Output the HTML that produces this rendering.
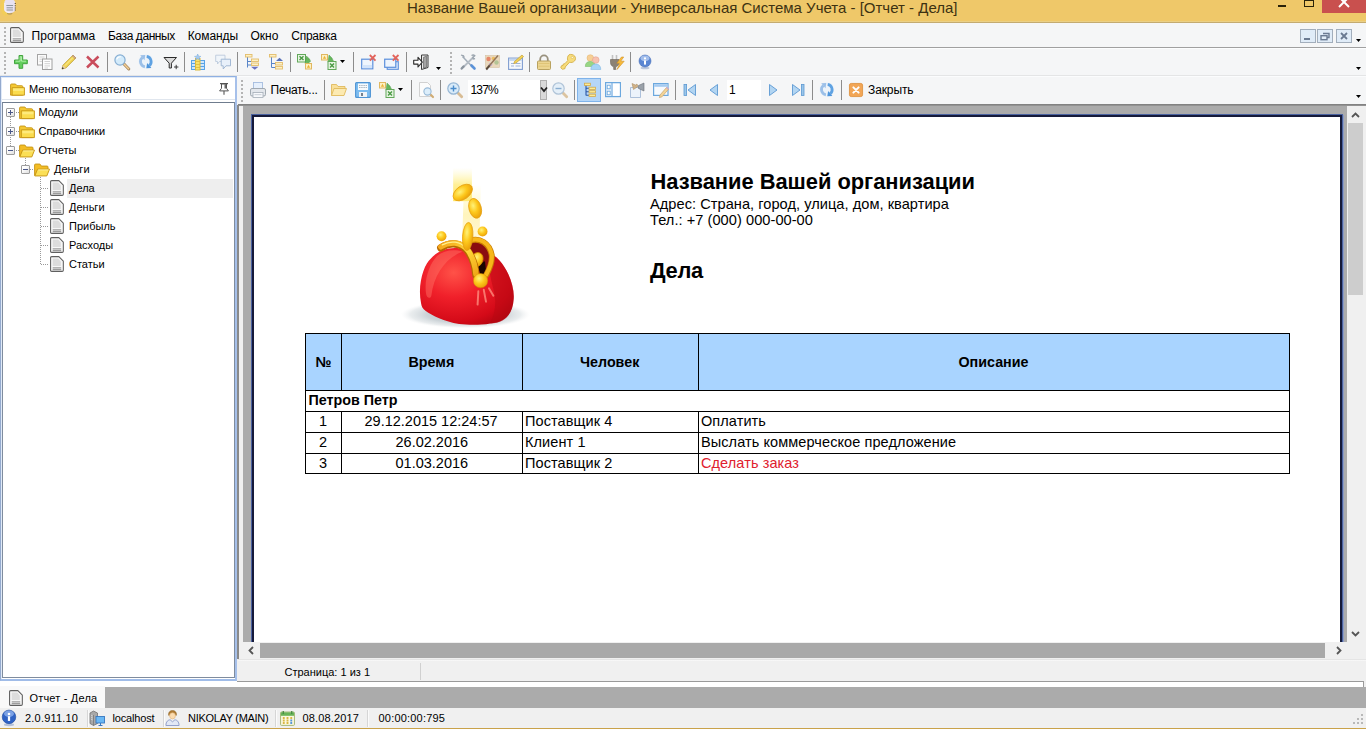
<!DOCTYPE html>
<html lang="ru">
<head>
<meta charset="utf-8">
<title>Название Вашей организации - Универсальная Система Учета - [Отчет - Дела]</title>
<style>
*{box-sizing:border-box;margin:0;padding:0}
html,body{width:1366px;height:729px;overflow:hidden;background:#f0f0f0;font-family:"Liberation Sans","DejaVu Sans",sans-serif;font-size:11px;color:#000}
#app{position:absolute;left:0;top:0;width:1366px;height:729px;overflow:hidden;background:#f0f0f0}
#app div,#app span,#app svg{position:absolute}
#app svg{overflow:visible}
.t{white-space:nowrap;line-height:1}
#title{left:0;top:0;width:1366px;height:22px;background:linear-gradient(#efc869 21px,#ebd085 21px)}
#titleline{left:0;top:22px;width:1366px;height:1px;background:#c4ab70}
#closebtn{left:1322px;top:0;width:44px;height:13px;background:#c9504e}
#minbtn{left:1278px;top:5px;width:8px;height:2px;background:#2a2208}
#maxbtn{left:1304px;top:-1px;width:10px;height:8px;border:1px solid #2a2208;border-top-width:2px}
#menubar{left:0;top:23px;width:1366px;height:24px;background:#f5f6f7}
#menuline{left:0;top:47px;width:1366px;height:1px;background:#a0a0a0}
#tb1{left:0;top:48px;width:1366px;height:27px;background:#f5f6f7}
#tb1line{left:0;top:75px;width:1366px;height:1px;background:#e4e5e6}
.sep{width:1px;background:#8c8c8c}
.grip{width:2px;background-image:linear-gradient(#b4b4b4 50%,rgba(0,0,0,0) 50%);background-size:2px 4px}
.mdi{width:16px;height:14px;background:#e0ecf8;border:1px solid #a2aebc}
#lp{left:0;top:76px;width:237px;height:605px;background:#fff;border:1px solid #8fb0e2;border-left-color:#94aace;border-right:2px solid #a6c0ea;border-bottom:2px solid #a0bce8;box-shadow:inset 1px 1px 0 0 #e0eaf8}
#lphead{left:2px;top:78px;width:233px;height:22px;background:#fff;border-bottom:1px solid #e0e6ee}
#tree{left:2px;top:102px;width:233px;height:576px;background:#fff;border:1px solid #7f8c9e;border-top-color:#6f7c8e}
#sel{left:67px;top:179px;width:166px;height:19px;background:#eeeeee}
.vdot{width:1px;background-image:linear-gradient(#9a9a9a 50%,rgba(0,0,0,0) 50%);background-size:1px 2px}
.hdot{height:1px;background-image:linear-gradient(90deg,#9a9a9a 50%,rgba(0,0,0,0) 50%);background-size:2px 1px}
.exp{width:9px;height:9px;border:1px solid #9c9c9c;border-radius:1px;background:linear-gradient(135deg,#fff 30%,#dedede)}
.exp i{position:absolute;background:#4a5788}
.exp i.h{left:1px;top:3px;width:5px;height:1px}
.exp i.v{left:3px;top:1px;width:1px;height:5px}
.tn{font-size:11px}
#tb2{left:237px;top:76px;width:1129px;height:28px;background:#f5f6f7}
#tb2line{left:238px;top:104px;width:1128px;height:2px;background:linear-gradient(#7a7a7a,#9a9a9a)}
#combo{left:468px;top:80px;width:79px;height:20px;background:#fff}
#combobtn{left:540px;top:80px;width:7px;height:20px;background:#d9d9d9;border:1px solid #b0b0b0}
#hibtn{left:577px;top:78px;width:24px;height:24px;background:#b5d6f7;border:1px solid #7fb3ea}
#pageinp{left:727px;top:80px;width:34px;height:20px;background:#fff}
#pv{left:239px;top:106px;width:1108px;height:536px;background:#ababab}
#pvleft{left:237px;top:105px;width:2px;height:554px;background:#8a8a8a}
#pvstrip{left:239px;top:106px;width:4px;height:536px;background:#f0f0f0}
#page{left:252px;top:115px;width:1090px;height:540px;background:#fff;border:2px solid #151a3a;box-shadow:0 0 0 1px #4a62a0,2px 0 0 0 #8e9cc4}
#vs{left:1347px;top:106px;width:17px;height:536px;background:#f0f0f0}
#vsthumb{left:1348px;top:123px;width:15px;height:172px;background:#cdcdcd}
#hs{left:239px;top:642px;width:1108px;height:17px;background:#f0f0f0}
#hsthumb{left:260px;top:643px;width:1065px;height:15px;background:#a9a9a9}
#pvbottom{left:238px;top:659px;width:1128px;height:2px;background:linear-gradient(#dcdcdc,#fff)}
#pgstat{left:238px;top:661px;width:1128px;height:20px;background:#f0f0f0}
#pgsep{left:420px;top:663px;width:1px;height:17px;background:#d0d0d0}
#whitebox{left:0px;top:681px;width:1364px;height:6px;background:#fff;border-right:1px solid #9a9a9a}
#whiteboxtop{left:237px;top:681px;width:1127px;height:1px;background:#9a9a9a}
#tabband{left:0;top:687px;width:1366px;height:21px;background:#ababab}
#tab{left:0;top:686px;width:105px;height:22px;background:#f9f9f9}
#statusbar{left:0;top:708px;width:1366px;height:20px;background:#f0f0f0}
#goldline{left:0;top:728px;width:1366px;height:1px;background:#c9a24a}
.st{font-size:11px}
.rb{font-weight:bold}
#thead{left:305px;top:333px;width:985px;height:58px;background:#a9d4ff}
.hl{left:305px;width:985px;height:1px;background:#000}
.vl{width:1px;background:#000}
.tb{font-weight:bold;font-size:14.300px}
.tr{font-size:14.500px}
.ssep{top:710px;width:2px;height:17px;background:linear-gradient(90deg,#d6d6d6 50%,#fbfbfb 50%)}
#hl1{left:0;top:48px;width:1366px;height:1px;background:#fcfdfe}
#hl2{left:237px;top:76px;width:1129px;height:1px;background:#fbfcfd}
.cy{letter-spacing:.09px}
</style>
</head>
<body>
<div id="app">
<!-- title bar -->
<div id="title"></div><div id="titleline"></div>
<svg style="left:3px;top:-1px" width="13.5" height="16" viewBox="0 0 16 16" preserveAspectRatio="none"><ellipse cx="3" cy="8" rx="6" ry="9" fill="#f7d24a" opacity=".45"/><path d="M1.500 4q0-3.500 3.500-3.500h5q4.500 0 4.500 4v6c0 2-2.800 3.500-6.500 3.500s-6.500-1.500-6.500-3.500z" fill="#e8e2f2"/><path d="M2.200 4v6.500c0 1.800 2.600 3 5.800 3" fill="none" stroke="#f8f4fc" stroke-width="1"/><path d="M4 6.500h8M4.300 8.800h7.500M4.300 11h7.500" stroke="#7c888c" stroke-width=".9"/><path d="M14.500 4v8" stroke="#4a3a2a" stroke-width="1.200" stroke-dasharray="1 1.200"/><path d="M5 14.500c2 .7 4 .7 6 0" stroke="#8a7a5a" stroke-width=".8" fill="none"/></svg>
<span class="t " id="titletxt" style="left:407px;top:0px;font-size:15px;color:#3d3212">Название Вашей организации - Универсальная Система Учета - [Отчет - Дела]</span>
<div id="minbtn"></div><div id="maxbtn"></div><div id="closebtn"></div>
<svg style="left:1338px;top:-3px" width="12" height="12" viewBox="0 0 12 12"><path d="M1 0l10 10M11 0L1 10" stroke="#fff" stroke-width="2"/></svg>
<!-- menu bar -->
<div id="menubar"></div><div id="menuline"></div>
<div class="grip" style="left:4px;top:27px;height:18px"></div>
<svg style="left:10px;top:27px" width="14" height="16" viewBox="0 0 14.500 16" preserveAspectRatio="none"><path d="M1.700.6h7.500l4.600 4.600v9q0 1.200-1.200 1.200H1.700q-1.100 0-1.100-1.200V1.800Q.6.600 1.700.6z" fill="#f6f6f6" stroke="#5f5f5f" stroke-width="1.100" stroke-linejoin="round"/><path d="M2.800 2.500h5.700l2.700 3v4.500H2.800z" fill="#dcdcdc"/><path d="M2.800 11.800h8.800M2.800 13.600h8.800" stroke="#9c9c9c" stroke-width="1.300"/></svg>
<span class="t " id="m1" style="left:31.6px;top:30px;font-size:12px;letter-spacing:0.1px">Программа</span>
<span class="t " id="m2" style="left:108px;top:30px;font-size:12px;letter-spacing:-0.42px">База данных</span>
<span class="t " id="m3" style="left:187.7px;top:30px;font-size:12px;letter-spacing:-0.07px">Команды</span>
<span class="t " id="m4" style="left:250.4px;top:30px;font-size:12px;letter-spacing:0.07px">Окно</span>
<span class="t " id="m5" style="left:291.2px;top:30px;font-size:12px;letter-spacing:-0.22px">Справка</span>
<div class="mdi" style="left:1300px;top:29px"></div>
<div class="mdi" style="left:1317px;top:29px"></div>
<div class="mdi" style="left:1336px;top:29px"></div>
<div style="left:1304px;top:38px;width:6px;height:2px;background:#6a7a92"></div>
<svg style="left:1320px;top:31px" width="10" height="10" viewBox="0 0 10 10"><path d="M3 2.500h6v4h-2" fill="none" stroke="#6a7a92" stroke-width="1.400"/><rect x="1" y="4.700" width="6" height="4" fill="none" stroke="#6a7a92" stroke-width="1.400"/></svg>
<svg style="left:1340px;top:32px" width="8" height="8" viewBox="0 0 8 8"><path d="M1 1l6 6M7 1L1 7" stroke="#6a7a92" stroke-width="1.800"/></svg>
<svg style="left:1356px;top:39px" width="5" height="3" viewBox="0 0 5 3"><path d="M0 0h5L2.500 3z" fill="#000"/></svg>
<!-- toolbar 1 -->
<div id="tb1"></div><div id="tb1line"></div><div id="hl1"></div>
<div class="grip" style="left:4px;top:52px;height:22px"></div>
<svg style="left:13px;top:54px" width="16" height="16" viewBox="0 0 16 16" preserveAspectRatio="none"><path d="M6 1.500h3.700v4.500h4.600v3.700H9.700v4.600H6V9.700H1.500V6h4.500z" fill="#63cf5e" stroke="#43a43f" stroke-width="1" stroke-linejoin="round"/><path d="M7.200 2.700h1.300v4.500h4.600M7.200 2.700v4.500H2.700" fill="none" stroke="#b4f0ae" stroke-width=".9"/></svg>
<svg style="left:36.5px;top:54px" width="16" height="16" viewBox="0 0 16 16" preserveAspectRatio="none"><rect x=".5" y=".5" width="9" height="10.500" fill="#fbfbfb" stroke="#a4a4a4"/><path d="M2.500 3h5M2.500 5.200h5M2.500 7.400h2.500" stroke="#c9c9c9" stroke-width=".8"/><rect x="5.500" y="5" width="9.500" height="10.500" fill="#fdfdfd" stroke="#a0a0a0"/><path d="M7.500 7.500h5.500M7.500 9.700h5.500M7.500 11.900h5.500M7.500 14h3.500" stroke="#c6c6c6" stroke-width=".8"/></svg>
<svg style="left:61px;top:54px" width="16" height="16" viewBox="0 0 16 16" preserveAspectRatio="none"><path d="M1 15l1-3.800L12 1.200l2.800 2.800L4.800 14z" fill="#f2d653" stroke="#bfa23a" stroke-width=".9" stroke-linejoin="round"/><path d="M1 15l1-3.800L4.800 14z" fill="#e9cfa8"/><path d="M.8 15.200l.7-2.200 1.500 1.500z" fill="#3a3a3a"/><path d="M11.200 2l2.800 2.800.9-.9L12.100 1.100z" fill="#d4a793" stroke="#a98468" stroke-width=".5"/><path d="M4 11.500L12 3.500" stroke="#fbeb9a" stroke-width="1"/></svg>
<svg style="left:84.5px;top:54px" width="16" height="16" viewBox="0 0 16 16" preserveAspectRatio="none"><path d="M2 2.500l11.500 11M13.500 2.500L2 13.500" stroke="#c94c5c" stroke-width="2.500" stroke-linecap="butt"/></svg>
<svg style="left:114px;top:54px" width="16" height="16" viewBox="0 0 16 16" preserveAspectRatio="none"><path d="M9.500 9.500l5.300 5.500" stroke="#a5855c" stroke-width="3" stroke-linecap="round"/><path d="M10 10l4.600 4.800" stroke="#f3cf94" stroke-width="1.500" stroke-linecap="round"/><circle cx="6" cy="6" r="5.100" fill="#d3ebfb" stroke="#86aed3" stroke-width="1.200"/><path d="M2.800 5.500A3.400 3.400 0 0 1 6.800 2.800" stroke="#fff" stroke-width="1.200" fill="none"/></svg>
<svg style="left:138px;top:54px" width="16" height="16" viewBox="0 0 16 16" preserveAspectRatio="none"><circle cx="7.800" cy="7.600" r="7.400" fill="#e6f2fc" opacity=".6"/><path d="M6.900 12.800A5.300 5.300 0 0 1 4.400 3.500" fill="none" stroke="#9cc0e8" stroke-width="2.800"/><path d="M7.300 1L2.200 1.200 6.500 6.200z" fill="#9cc0e8"/><path d="M8.700 2.400A5.300 5.300 0 0 1 11.200 11.700" fill="none" stroke="#5fa2e2" stroke-width="2.800"/><path d="M8.300 14.200l5.100-.2L9.100 9z" fill="#4f96dc"/></svg>
<svg style="left:162.5px;top:54px" width="16" height="16" viewBox="0 0 16 16" preserveAspectRatio="none"><path d="M1 3.500h12.500L8.400 9.200v4.800H6.200V9.200z" fill="#dcdcdc" stroke="#2a2a2a" stroke-width="1" stroke-linejoin="round"/><path d="M11 13h4.400M13.200 10.800v4.400" stroke="#2a2a2a" stroke-width=".9"/></svg>
<svg style="left:190px;top:54px" width="16" height="16" viewBox="0 0 16 16" preserveAspectRatio="none"><rect x="1.500" y="6.500" width="13" height="9" fill="#cfe6fb" stroke="#58a3e6"/><path d="M1.500 9.500h13M1.500 12.500h13" stroke="#58a3e6"/><rect x="5.500" y="4.500" width="4.500" height="11.500" fill="#f9e26a" stroke="#dcb93c"/><path d="M5.500 7.500h4.500M5.500 10.500h4.500M5.500 13.500h4.500" stroke="#dcb93c" stroke-width=".8"/><path d="M7.700 0l.9 2.200 2.300.2-1.800 1.400.6 2.200-2-1.300-2 1.300.6-2.200-1.800-1.400 2.300-.2z" fill="#a6cbf0" stroke="#76a8dc" stroke-width=".5"/></svg>
<svg style="left:215px;top:54px" width="16" height="16" viewBox="0 0 16 16" preserveAspectRatio="none"><path d="M.7 1.200h9.300v6.300h-5.500l-2 2.500v-2.500H.7z" fill="#f0f5fa" stroke="#bccbdc" stroke-width=".9"/><path d="M6.200 5.200h9.300v6.600h-4.500l-2.800 3.200v-3.200h-2z" fill="#e8f0fa" stroke="#9ab2d0" stroke-width=".9" stroke-linejoin="round"/></svg>
<svg style="left:245px;top:54px" width="16" height="16" viewBox="0 0 16 16" preserveAspectRatio="none"><path d="M2.500 3v10.500M2.500 7.500h4M2.500 11h4" stroke="#5a86c8" stroke-width="1" fill="none"/><rect x=".5" y=".5" width="6.500" height="2.500" fill="#fdf0c4" stroke="#e3bd6a" stroke-width=".9"/><rect x="6.500" y="5" width="7" height="2.500" fill="#fdf0c4" stroke="#e3bd6a" stroke-width=".9"/><rect x="6.500" y="9" width="7" height="2.500" fill="#fdf0c4" stroke="#e3bd6a" stroke-width=".9"/><path d="M6 12.800h7.500l-3.750 3z" fill="#6a72c0"/></svg>
<svg style="left:268.5px;top:54px" width="16" height="16" viewBox="0 0 16 16" preserveAspectRatio="none"><path d="M2.500 3v10.500M2.500 9.500h4M2.500 13.500h4" stroke="#5a86c8" stroke-width="1" fill="none"/><rect x=".5" y=".5" width="6.500" height="2.500" fill="#fdf0c4" stroke="#e3bd6a" stroke-width=".9"/><rect x="6.500" y="8.500" width="7" height="2.500" fill="#fdf0c4" stroke="#e3bd6a" stroke-width=".9"/><rect x="6.500" y="12.500" width="7" height="2.500" fill="#fdf0c4" stroke="#e3bd6a" stroke-width=".9"/><path d="M7 7h7l-3.500-3.300z" fill="#5a72b8"/></svg>
<svg style="left:297px;top:54px" width="16" height="16" viewBox="0 0 16 16" preserveAspectRatio="none"><rect x=".5" y=".5" width="8" height="7.500" fill="#e8f5e4" stroke="#62a85a"/><path d="M2.500 2.300l4 3.800M6.500 2.300l-4 3.800" stroke="#4a9a44" stroke-width="1.400"/><path d="M9.500 2l3.500 3.500h-1.200l2 1.500-3.300 3-1-1.500-1.500 1z" fill="#66b85c" stroke="#3f8f3a" stroke-width=".4"/><rect x="8.500" y="9.500" width="6" height="5.500" fill="#fdf0c4" stroke="#e0b860"/><path d="M11.500 10.800l1.700 3h-3.400z" fill="#eab435"/></svg>
<svg style="left:321px;top:54px" width="16" height="16" viewBox="0 0 16 16" preserveAspectRatio="none"><rect x=".5" y=".5" width="6" height="5.500" fill="#fdf0c4" stroke="#e0b860"/><path d="M3.500 1.800l1.700 3H1.800z" fill="#eab435"/><path d="M8 1l3.500 3.500h-1.200l2.200 1.800-3 2.700-1.200-1.500-1.300.8z" fill="#66b85c" stroke="#3f8f3a" stroke-width=".4"/><rect x="7" y="7.500" width="8" height="8" fill="#e8f5e4" stroke="#62a85a"/><path d="M9 9.500l4 4M13 9.500l-4 4" stroke="#4a9a44" stroke-width="1.400"/></svg>
<svg style="left:361px;top:54px" width="16" height="16" viewBox="0 0 16 16" preserveAspectRatio="none"><rect x=".7" y="5.200" width="11.100" height="9.600" fill="#eef5fd" stroke="#5b8fdc" stroke-width="1.200"/><rect x="1.400" y="11" width="9.700" height="3.200" fill="#d3e4fa"/><path d="M8.800 1l5.700 5.700M14.500 1L8.800 6.700" stroke="#e2645c" stroke-width="1.800"/></svg>
<svg style="left:384px;top:54px" width="16" height="16" viewBox="0 0 16 16" preserveAspectRatio="none"><rect x="3.200" y="7.700" width="11.100" height="7.600" fill="#dfebfb" stroke="#5b8fdc" stroke-width="1.100"/><rect x=".7" y="5.200" width="11.100" height="8.100" fill="#eef5fd" stroke="#5b8fdc" stroke-width="1.200"/><path d="M8.800 1l5.700 5.700M14.500 1L8.800 6.700" stroke="#e2645c" stroke-width="1.800"/></svg>
<svg style="left:413px;top:54px" width="16" height="16" viewBox="0 0 16 16" preserveAspectRatio="none"><path d="M8.500 1h6.500v12.500l-6.500 2z" fill="#ececec" stroke="#3a3a3a" stroke-width="1"/><path d="M10.500 3.200l3-1v11l-3 1z" fill="#a4a4a4" stroke="#555" stroke-width=".6"/><path d="M.7 6.300h4.300V3.400l4.300 4.800-4.300 4.800v-2.900H.7z" fill="#fff" stroke="#2a2a2a" stroke-width="1.100" stroke-linejoin="round"/></svg>
<svg style="left:460px;top:54px" width="16" height="16" viewBox="0 0 16 16" preserveAspectRatio="none"><path d="M2.500 2.500l10 10.500" stroke="#a2adb8" stroke-width="1.500"/><path d="M11.500 11.500l3 3" stroke="#5b92d8" stroke-width="2.600" stroke-linecap="round"/><path d="M13.500 3L3 13.500" stroke="#b4bcc4" stroke-width="1.800"/><path d="M11.500 1.500c1-.6 2.500-.6 3.300.2l-2 1.800.5 1.500 1.800-.3" fill="none" stroke="#9aa4ae" stroke-width="1.300"/><path d="M3.500 12.500l-1.800 2" stroke="#8a949e" stroke-width="2.400" stroke-linecap="round"/><path d="M1 1l2.500.8.700 1.700" stroke="#9aa4ae" stroke-width="1.300" fill="none"/></svg>
<svg style="left:484px;top:54px" width="16" height="16" viewBox="0 0 16 16" preserveAspectRatio="none"><rect x="1.500" y="1.500" width="14" height="12" fill="#e9d8bc" stroke="#d4c2a2" stroke-width=".6"/><circle cx="4.500" cy="5" r="2.200" fill="#e6876a"/><circle cx="9.500" cy="4.500" r="1.800" fill="#ecbc62"/><circle cx="12.500" cy="8.500" r="2.200" fill="#b3c496"/><circle cx="6.500" cy="10.500" r="1.800" fill="#c4b2d2"/><path d="M14 1.500L5.500 11.500" stroke="#94765a" stroke-width="1.500"/><path d="M5.700 11.300l-3.500 4.200" stroke="#5a4a3a" stroke-width="2"/></svg>
<svg style="left:507.5px;top:54px" width="16" height="16" viewBox="0 0 16 16" preserveAspectRatio="none"><rect x=".6" y="4.100" width="13.800" height="11.300" fill="#f6f9fd" stroke="#7f9dd0" stroke-width="1.100"/><rect x="1.200" y="4.700" width="12.600" height="2.200" fill="#c4d6f0"/><path d="M3 9.500h3M3 12h3M7.500 9.500h5M7.500 12h5" stroke="#9eb4da" stroke-width="1.100"/><path d="M6.500 7.500L14 1l1.500 1.700L8 9l-2.200.6z" fill="#f4d458" stroke="#c09c36" stroke-width=".7"/></svg>
<svg style="left:536px;top:54px" width="16" height="16" viewBox="0 0 16 16" preserveAspectRatio="none"><path d="M4.200 7.500V5.200a3.800 3.800 0 0 1 7.600 0v2.300" fill="none" stroke="#99917e" stroke-width="1.800"/><rect x="1.500" y="7" width="13" height="8.500" rx="1" fill="#ecd591" stroke="#b9a260"/><path d="M2.500 9.500h11M2.500 12.200h11" stroke="#dfc476" stroke-width="1"/></svg>
<svg style="left:560px;top:54px" width="16" height="16" viewBox="0 0 16 16" preserveAspectRatio="none"><path d="M9 .8c1.700-.8 4.300-.3 5.700 1.300 1.200 1.600 1 3.700-.3 5-1.500 1.400-3.200 1.700-4.800 1.100L5.200 13l-.2 1.600-2.500.7-1.700-1.500.6-2 1.600-.3.300-1.500 1.600-.3 2.900-3.200C7 4.400 7.600 2 9 .8z" fill="#f7dc7c" stroke="#d4b04a" stroke-width=".9" stroke-linejoin="round"/><circle cx="12.300" cy="3.500" r="1.100" fill="#fff8dc" stroke="#d4b04a" stroke-width=".5"/></svg>
<svg style="left:584.5px;top:54px" width="16" height="16" viewBox="0 0 16 16" preserveAspectRatio="none"><circle cx="5.300" cy="4" r="3.300" fill="#f6cf96" stroke="#e0b26c" stroke-width=".5"/><path d="M.3 12.500c0-3.300 1.800-5 5-5s5 1.700 5 5z" fill="#98d684" stroke="#6eb65e" stroke-width=".5"/><circle cx="10.800" cy="6" r="3.300" fill="#f7c2b0" stroke="#e09a86" stroke-width=".5"/><path d="M5.800 15.500c0-3.500 2-5.500 5-5.500s5 2 5 5.500z" fill="#a6d4f6" stroke="#78b0de" stroke-width=".5"/></svg>
<svg style="left:609px;top:54px" width="16" height="16" viewBox="0 0 16 16" preserveAspectRatio="none"><path d="M3.500 1v5M7.500 1v5" stroke="#c2c2c2" stroke-width="1.600"/><path d="M1.500 5.500h8.500v3c0 2.500-1.800 4-3.300 4.300V15.500h-2v-2.700C3.300 12.500 1.500 11 1.500 8.500z" fill="#8c8274" stroke="#6a6258" stroke-width=".6"/><path d="M12.500 3L7.800 9.200h3l-2.800 6.300 7.200-8.300h-3.500l3-4.200z" fill="#f8bb3c" stroke="#d09024" stroke-width=".6" stroke-linejoin="round"/></svg>
<svg style="left:637px;top:54px" width="16" height="16" viewBox="0 0 16 16" preserveAspectRatio="none"><ellipse cx="8" cy="14" rx="4.500" ry="1.300" fill="#bcc8dc"/><circle cx="8" cy="7" r="6" fill="#5a86d2" stroke="#4a70b8" stroke-width=".6"/><ellipse cx="8" cy="4.200" rx="4.400" ry="2.800" fill="#b4ccf2" opacity=".8"/><rect x="7" y="6.400" width="2" height="4.200" fill="#fff"/><circle cx="8" cy="4.400" r="1.150" fill="#fff"/></svg>
<div class="sep" style="left:107px;top:52px;height:20px;background:#8c8c8c"></div>
<div class="sep" style="left:184px;top:52px;height:20px;background:#8c8c8c"></div>
<div class="sep" style="left:237px;top:52px;height:20px;background:#8c8c8c"></div>
<div class="sep" style="left:290px;top:52px;height:20px;background:#8c8c8c"></div>
<div class="sep" style="left:353px;top:52px;height:20px;background:#8c8c8c"></div>
<div class="sep" style="left:406px;top:52px;height:20px;background:#8c8c8c"></div>
<div class="sep" style="left:529px;top:52px;height:20px;background:#8c8c8c"></div>
<div class="sep" style="left:630px;top:52px;height:20px;background:#8c8c8c"></div>
<svg style="left:340px;top:60px" width="5" height="3" viewBox="0 0 5 3"><path d="M0 0h5L2.500 3z" fill="#000"/></svg>
<svg style="left:436px;top:67px" width="5" height="3" viewBox="0 0 5 3"><path d="M0 0h5L2.500 3z" fill="#000"/></svg>
<div class="grip" style="left:450px;top:52px;height:22px"></div>
<svg style="left:1356px;top:67px" width="5" height="3" viewBox="0 0 5 3"><path d="M0 0h5L2.500 3z" fill="#000"/></svg>
<!-- left panel: user menu -->
<div id="lp"></div>
<div id="lphead"></div>
<div id="tree"></div>
<svg style="left:10px;top:82.5px" width="15" height="13.5" viewBox="0 0 16 16" preserveAspectRatio="none"><path d="M.6 14.400V2.200q0-1 1-1h4.300l1.500 2h5.200q1 0 1 1v10.200z" fill="#f5c832" stroke="#c69516" stroke-width="1"/><path d="M2.300 5.500h13.100v8.900H2.300z" fill="#fbdc4e" stroke="#c69516" stroke-width="1" stroke-linejoin="round"/><path d="M3.300 6.500h11.100v3H3.300z" fill="#ffee88" opacity=".8"/></svg>
<span class="t" id="lptitle" style="left:29px;top:84px;font-size:11px">Меню пользователя</span>
<svg style="left:219px;top:83px" width="10" height="12" viewBox="0 0 10 12" preserveAspectRatio="none"><path d="M1 .6h8" stroke="#555" stroke-width="1.200"/><path d="M2.500 1v4.300L.6 7.900h8.800L7.500 5.300V1z" fill="#fff" stroke="#555" stroke-width="1" stroke-linejoin="round"/><path d="M6.300 1.200v4.300" stroke="#666" stroke-width="1.600"/><path d="M5 8v3.800" stroke="#555" stroke-width="1.100"/></svg>
<div id="sel"></div>
<!-- dotted connectors -->
<div class="vdot" style="left:10px;top:117px;height:29px"></div>
<div class="hdot" style="left:16px;top:112px;width:3px"></div>
<div class="hdot" style="left:16px;top:131px;width:3px"></div>
<div class="hdot" style="left:16px;top:150px;width:3px"></div>
<div class="vdot" style="left:25px;top:158px;height:7px"></div>
<div class="hdot" style="left:30px;top:169px;width:4px"></div>
<div class="vdot" style="left:40px;top:177px;height:88px"></div>
<div class="hdot" style="left:41px;top:188px;width:8px"></div>
<div class="hdot" style="left:41px;top:207px;width:8px"></div>
<div class="hdot" style="left:41px;top:226px;width:8px"></div>
<div class="hdot" style="left:41px;top:245px;width:8px"></div>
<div class="hdot" style="left:41px;top:264px;width:8px"></div>
<!-- expanders -->
<div class="exp" style="left:6px;top:108px"><i class="h"></i><i class="v"></i></div>
<div class="exp" style="left:6px;top:127px"><i class="h"></i><i class="v"></i></div>
<div class="exp" style="left:6px;top:146px"><i class="h"></i></div>
<div class="exp" style="left:21px;top:165px"><i class="h"></i></div>
<!-- nodes -->
<svg style="left:18.5px;top:105.5px" width="16" height="14" viewBox="0 0 16 16" preserveAspectRatio="none"><path d="M.6 14.400V2.200q0-1 1-1h4.300l1.500 2h5.200q1 0 1 1v10.200z" fill="#f5c832" stroke="#c69516" stroke-width="1"/><path d="M2.300 5.500h13.100v8.900H2.300z" fill="#fbdc4e" stroke="#c69516" stroke-width="1" stroke-linejoin="round"/><path d="M3.300 6.500h11.100v3H3.300z" fill="#ffee88" opacity=".8"/></svg>
<span class="t tn" style="left:38.500px;top:106.500px">Модули</span>
<svg style="left:18.5px;top:124.5px" width="16" height="14" viewBox="0 0 16 16" preserveAspectRatio="none"><path d="M.6 14.400V2.200q0-1 1-1h4.300l1.500 2h5.200q1 0 1 1v10.200z" fill="#f5c832" stroke="#c69516" stroke-width="1"/><path d="M2.300 5.500h13.100v8.900H2.300z" fill="#fbdc4e" stroke="#c69516" stroke-width="1" stroke-linejoin="round"/><path d="M3.300 6.500h11.100v3H3.300z" fill="#ffee88" opacity=".8"/></svg>
<span class="t tn" id="tn2" style="left:38.500px;top:125.500px">Справочники</span>
<svg style="left:18.5px;top:143.5px" width="16" height="14" viewBox="0 0 16 16" preserveAspectRatio="none"><path d="M.6 14.400V2.200q0-1 1-1h4.300l1.500 2.300h5.600q1 0 1 1v2.500" fill="#f3bd25" stroke="#c69516" stroke-width="1"/><path d="M.8 14.800l2.700-7.800h12l-2.700 7.800z" fill="#fbdf56" stroke="#c69516" stroke-width="1" stroke-linejoin="round"/><path d="M4.200 7.900h10.200" stroke="#fff5b0" stroke-width=".9"/></svg>
<span class="t tn" style="left:38.500px;top:144.500px">Отчеты</span>
<svg style="left:33.5px;top:162.5px" width="16" height="14" viewBox="0 0 16 16" preserveAspectRatio="none"><path d="M.6 14.400V2.200q0-1 1-1h4.300l1.500 2.300h5.600q1 0 1 1v2.500" fill="#f3bd25" stroke="#c69516" stroke-width="1"/><path d="M.8 14.800l2.700-7.800h12l-2.700 7.800z" fill="#fbdf56" stroke="#c69516" stroke-width="1" stroke-linejoin="round"/><path d="M4.200 7.900h10.200" stroke="#fff5b0" stroke-width=".9"/></svg>
<span class="t tn" style="left:54px;top:163.500px">Деньги</span>
<svg style="left:50px;top:180px" width="14" height="16" viewBox="0 0 14.500 16" preserveAspectRatio="none"><path d="M1.700.6h7.500l4.600 4.600v9q0 1.200-1.200 1.200H1.700q-1.100 0-1.100-1.200V1.800Q.6.600 1.700.6z" fill="#f6f6f6" stroke="#5f5f5f" stroke-width="1.100" stroke-linejoin="round"/><path d="M2.800 2.500h5.700l2.700 3v4.500H2.800z" fill="#dcdcdc"/><path d="M2.800 11.800h8.800M2.800 13.600h8.800" stroke="#9c9c9c" stroke-width="1.300"/></svg>
<span class="t tn" style="left:69px;top:182.500px">Дела</span>
<svg style="left:50px;top:199px" width="14" height="16" viewBox="0 0 14.500 16" preserveAspectRatio="none"><path d="M1.700.6h7.500l4.600 4.600v9q0 1.200-1.200 1.200H1.700q-1.100 0-1.100-1.200V1.800Q.6.600 1.700.6z" fill="#f6f6f6" stroke="#5f5f5f" stroke-width="1.100" stroke-linejoin="round"/><path d="M2.800 2.500h5.700l2.700 3v4.500H2.800z" fill="#dcdcdc"/><path d="M2.800 11.800h8.800M2.800 13.600h8.800" stroke="#9c9c9c" stroke-width="1.300"/></svg>
<span class="t tn" style="left:69px;top:201.500px">Деньги</span>
<svg style="left:50px;top:218px" width="14" height="16" viewBox="0 0 14.500 16" preserveAspectRatio="none"><path d="M1.700.6h7.500l4.600 4.600v9q0 1.200-1.200 1.200H1.700q-1.100 0-1.100-1.200V1.800Q.6.600 1.700.6z" fill="#f6f6f6" stroke="#5f5f5f" stroke-width="1.100" stroke-linejoin="round"/><path d="M2.800 2.500h5.700l2.700 3v4.500H2.800z" fill="#dcdcdc"/><path d="M2.800 11.800h8.800M2.800 13.600h8.800" stroke="#9c9c9c" stroke-width="1.300"/></svg>
<span class="t tn" style="left:69px;top:220.500px">Прибыль</span>
<svg style="left:50px;top:237px" width="14" height="16" viewBox="0 0 14.500 16" preserveAspectRatio="none"><path d="M1.700.6h7.500l4.600 4.600v9q0 1.200-1.200 1.200H1.700q-1.100 0-1.100-1.200V1.800Q.6.600 1.700.6z" fill="#f6f6f6" stroke="#5f5f5f" stroke-width="1.100" stroke-linejoin="round"/><path d="M2.800 2.500h5.700l2.700 3v4.500H2.800z" fill="#dcdcdc"/><path d="M2.800 11.800h8.800M2.800 13.600h8.800" stroke="#9c9c9c" stroke-width="1.300"/></svg>
<span class="t tn" style="left:69px;top:239.500px">Расходы</span>
<svg style="left:50px;top:256px" width="14" height="16" viewBox="0 0 14.500 16" preserveAspectRatio="none"><path d="M1.700.6h7.500l4.600 4.600v9q0 1.200-1.200 1.200H1.700q-1.100 0-1.100-1.200V1.800Q.6.600 1.700.6z" fill="#f6f6f6" stroke="#5f5f5f" stroke-width="1.100" stroke-linejoin="round"/><path d="M2.800 2.500h5.700l2.700 3v4.500H2.800z" fill="#dcdcdc"/><path d="M2.800 11.800h8.800M2.800 13.600h8.800" stroke="#9c9c9c" stroke-width="1.300"/></svg>
<span class="t tn" style="left:69px;top:258.500px">Статьи</span>

<!-- preview toolbar -->
<div id="tb2"></div><div id="tb2line"></div><div id="hl2"></div>
<div class="grip" style="left:241px;top:80px;height:22px"></div>
<svg style="left:250px;top:82px" width="16" height="16" viewBox="0 0 16 16" preserveAspectRatio="none"><rect x="3.500" y=".5" width="9" height="7" fill="#e6f0fc" stroke="#a4bcde" stroke-width=".9"/><rect x=".5" y="6.500" width="15" height="7.500" rx="1.500" fill="#e3e7ec" stroke="#99a1a9" stroke-width=".9"/><rect x="3" y="10.500" width="10" height="5" fill="#f7f9fc" stroke="#a4adb7" stroke-width=".8"/><path d="M4.500 12.700h7" stroke="#c7ced6"/></svg>
<span class="t" id="prn" style="left:270.500px;top:83.500px;font-size:12px;letter-spacing:-0.25px">Печать...</span>
<div class="sep" style="left:324px;top:80px;height:20px;background:#8c8c8c"></div>
<svg style="left:331px;top:82px" width="16" height="16" viewBox="0 0 16 16" preserveAspectRatio="none"><path d="M.5 13.500V2.500h5l1.500 2h7v2" fill="#f9e09a" stroke="#e0ba5c" stroke-width=".9"/><path d="M.5 13.500l2.500-7h12.500l-2.500 7z" fill="#fceab2" stroke="#e0ba5c" stroke-width=".9" stroke-linejoin="round"/></svg>
<svg style="left:355px;top:82px" width="16" height="16" viewBox="0 0 16 16" preserveAspectRatio="none"><rect x=".6" y=".6" width="14.800" height="14.800" rx="1" fill="#7cbcf0" stroke="#4f94d4" stroke-width="1.100"/><rect x="3" y="1.500" width="10" height="6.500" fill="#f6fafd"/><path d="M4 3.500h8M4 5.500h8" stroke="#a4b0bc" stroke-width=".9" stroke-dasharray="1.500 .7"/><rect x="4" y="10" width="8" height="5" fill="#f0f4f8"/><rect x="6" y="11" width="2" height="3" fill="#74808c"/></svg>
<svg style="left:379px;top:82px" width="16" height="16" viewBox="0 0 16 16" preserveAspectRatio="none"><rect x=".5" y=".5" width="6" height="5.500" fill="#fdf0c4" stroke="#e0b860"/><path d="M3.500 1.800l1.700 3H1.800z" fill="#eab435"/><path d="M8 1l3.500 3.500h-1.200l2.200 1.800-3 2.700-1.200-1.500-1.300.8z" fill="#66b85c" stroke="#3f8f3a" stroke-width=".4"/><rect x="7" y="7.500" width="8" height="8" fill="#e8f5e4" stroke="#62a85a"/><path d="M9 9.500l4 4M13 9.500l-4 4" stroke="#4a9a44" stroke-width="1.400"/></svg>
<svg style="left:398px;top:88px" width="5" height="3" viewBox="0 0 5 3"><path d="M0 0h5L2.500 3z" fill="#000"/></svg>
<div class="sep" style="left:411px;top:80px;height:20px;background:#8c8c8c"></div>
<svg style="left:418px;top:82px" width="16" height="16" viewBox="0 0 16 16" preserveAspectRatio="none"><path d="M1.500.5h8l3 3v11h-11z" fill="#fcfcfc" stroke="#cccccc" stroke-width=".9"/><path d="M11.500 11.500l3.500 3.500" stroke="#d0ac74" stroke-width="2.200" stroke-linecap="round"/><circle cx="9.500" cy="9.500" r="3.600" fill="#dceefb" stroke="#98bad8" stroke-width="1.100"/></svg>
<div class="sep" style="left:440px;top:80px;height:20px;background:#8c8c8c"></div>
<svg style="left:447px;top:82px" width="16" height="16" viewBox="0 0 16 16" preserveAspectRatio="none"><path d="M10.500 10.500l4.200 4.300" stroke="#d8bc94" stroke-width="2.800" stroke-linecap="round"/><circle cx="6.500" cy="6.500" r="5.700" fill="#d9ebf9" stroke="#96b6d4" stroke-width="1.200"/><path d="M3.500 6.500h6M6.500 3.500v6" stroke="#4a8ccc" stroke-width="1.400"/></svg>
<div id="combo"></div><div id="combobtn"></div>
<svg style="left:540px;top:86px" width="7" height="8" viewBox="0 0 7 8"><path d="M1 1.500l3 3.500 3-3.500" fill="none" stroke="#222" stroke-width="1.800"/></svg>
<span class="t" id="zoomtxt" style="left:470.500px;top:83.500px;font-size:12px;letter-spacing:-0.8px">137%</span>
<svg style="left:552px;top:82px" width="16" height="16" viewBox="0 0 16 16" preserveAspectRatio="none"><path d="M10.500 10.500l4.200 4.300" stroke="#dcc4a0" stroke-width="2.800" stroke-linecap="round"/><circle cx="6.500" cy="6.500" r="5.700" fill="#e4eff8" stroke="#b0c4d8" stroke-width="1.200"/><path d="M3.500 6.500h6" stroke="#8aaed0" stroke-width="1.400"/></svg>
<div class="sep" style="left:574px;top:80px;height:20px;background:#8c8c8c"></div>
<div id="hibtn"></div>
<svg style="left:582px;top:82px" width="16" height="16" viewBox="0 0 16 16" preserveAspectRatio="none"><path d="M4 3v10.500M4 6.300h3M4 9.800h3M4 13.300h3" stroke="#2a58a8" stroke-width="1.100" fill="none"/><rect x="2.500" y="1.200" width="6" height="2.200" fill="#fcec96" stroke="#d4aa4a" stroke-width=".8"/><rect x="7" y="5.200" width="6.500" height="2.200" fill="#fcec96" stroke="#d4aa4a" stroke-width=".8"/><rect x="7" y="8.700" width="6.500" height="2.200" fill="#fcec96" stroke="#d4aa4a" stroke-width=".8"/><rect x="7" y="12.200" width="6.500" height="2.200" fill="#fcec96" stroke="#d4aa4a" stroke-width=".8"/></svg>
<svg style="left:605px;top:82px" width="16" height="16" viewBox="0 0 16 16" preserveAspectRatio="none"><rect x=".6" y=".6" width="14.800" height="14" fill="#f0f6fc" stroke="#6ca8de" stroke-width="1.200"/><path d="M7 1v13.500" stroke="#6ca8de" stroke-width="1.100"/><rect x="2.200" y="3.200" width="3" height="3.600" fill="#fff" stroke="#6ca8de" stroke-width=".9"/><rect x="2.200" y="9.200" width="3" height="3.600" fill="#fff" stroke="#6ca8de" stroke-width=".9"/><rect x="8" y="2" width="6.500" height="11.500" fill="#fff"/></svg>
<svg style="left:629px;top:82px" width="16" height="16" viewBox="0 0 16 16" preserveAspectRatio="none"><path d="M1.500 5.500h8l2 2v8h-10z" fill="#ecf3fb" stroke="#a4bad6" stroke-width=".9"/><path d="M3 1.500l3.500 1.500 1.500-1 1 2.500-4.500 3z" fill="#d0b288" stroke="#a4865a" stroke-width=".5"/><path d="M9.500 3.500l5.500-2.500v8l-5.500-2.500z" fill="#9aa1a9" stroke="#6a7179" stroke-width=".6"/></svg>
<svg style="left:653px;top:82px" width="16" height="16" viewBox="0 0 16 16" preserveAspectRatio="none"><rect x=".6" y="1.600" width="14.400" height="11.800" fill="#f7fafd" stroke="#6ca8de" stroke-width="1.200"/><rect x="1.200" y="2.200" width="13.200" height="2.600" fill="#a6cbf0"/><path d="M7 13l6.500-7.500 2 1.700L9 14.800l-2.600.8z" fill="#f2d498" stroke="#c8a468" stroke-width=".7"/><path d="M13.500 5.500l2 1.700" stroke="#d0a8c8" stroke-width="1.500"/></svg>
<div class="sep" style="left:675px;top:80px;height:20px;background:#8c8c8c"></div>
<svg style="left:682px;top:82px" width="16" height="16" viewBox="0 0 16 16" preserveAspectRatio="none"><rect x="2" y="2.500" width="2.600" height="11" fill="#9ac6ea" stroke="#5c98d2" stroke-width=".8"/><path d="M13.500 2.500v11l-7.500-5.500z" fill="#b2d5f2" stroke="#5c98d2" stroke-width=".9" stroke-linejoin="round"/></svg>
<svg style="left:706px;top:82px" width="16" height="16" viewBox="0 0 16 16" preserveAspectRatio="none"><path d="M11.500 2.500v11l-7.500-5.500z" fill="#b2d5f2" stroke="#5c98d2" stroke-width=".9" stroke-linejoin="round"/></svg>
<div id="pageinp"></div>
<span class="t" style="left:729px;top:83.500px;font-size:12px">1</span>
<svg style="left:765px;top:82px" width="16" height="16" viewBox="0 0 16 16" preserveAspectRatio="none"><path d="M4.500 2.500v11l7.500-5.500z" fill="#b2d5f2" stroke="#5c98d2" stroke-width=".9" stroke-linejoin="round"/></svg>
<svg style="left:790px;top:82px" width="16" height="16" viewBox="0 0 16 16" preserveAspectRatio="none"><rect x="11.400" y="2.500" width="2.600" height="11" fill="#9ac6ea" stroke="#5c98d2" stroke-width=".8"/><path d="M2.500 2.500v11l7.500-5.500z" fill="#b2d5f2" stroke="#5c98d2" stroke-width=".9" stroke-linejoin="round"/></svg>
<div class="sep" style="left:812px;top:80px;height:20px;background:#8c8c8c"></div>
<svg style="left:819px;top:82px" width="16" height="16" viewBox="0 0 16 16" preserveAspectRatio="none"><circle cx="7.800" cy="7.600" r="7.400" fill="#e6f2fc" opacity=".6"/><path d="M6.900 12.800A5.300 5.300 0 0 1 4.400 3.500" fill="none" stroke="#9cc0e8" stroke-width="2.800"/><path d="M7.300 1L2.200 1.200 6.500 6.200z" fill="#9cc0e8"/><path d="M8.700 2.400A5.300 5.300 0 0 1 11.200 11.700" fill="none" stroke="#5fa2e2" stroke-width="2.800"/><path d="M8.300 14.200l5.100-.2L9.100 9z" fill="#4f96dc"/></svg>
<div class="sep" style="left:841px;top:80px;height:20px;background:#8c8c8c"></div>
<svg style="left:849px;top:83px" width="14" height="14" viewBox="0 0 16 16" preserveAspectRatio="none"><rect x=".5" y=".5" width="15" height="15" rx="2" fill="#f2a656" stroke="#dc8c36" stroke-width=".9"/><path d="M5 5l6 6M11 5l-6 6" stroke="#fff" stroke-width="2.300" stroke-linecap="round"/></svg>
<span class="t" id="zakr" style="left:868px;top:83.500px;font-size:12px;letter-spacing:-0.1px">Закрыть</span>

<svg style="left:1356px;top:95px" width="5" height="3" viewBox="0 0 5 3"><path d="M0 0h5L2.500 3z" fill="#000"/></svg>
<!-- preview area -->
<div id="pv"></div>
<div id="pvleft"></div><div id="pvstrip"></div>
<div id="page"></div>
<!-- vertical scrollbar -->
<div id="vs"></div><div id="vsthumb"></div>
<svg style="left:1351px;top:112px" width="9" height="6" viewBox="0 0 9 6"><path d="M1 5l3.500-3.500L8 5" fill="none" stroke="#555" stroke-width="1.800"/></svg>
<svg style="left:1351px;top:631px" width="9" height="6" viewBox="0 0 9 6"><path d="M1 1l3.500 3.500L8 1" fill="none" stroke="#555" stroke-width="1.800"/></svg>
<!-- horizontal scrollbar -->
<div id="hs"></div><div id="hsthumb"></div>
<svg style="left:248px;top:646px" width="6" height="9" viewBox="0 0 6 9"><path d="M5 1L1.500 4.500 5 8" fill="none" stroke="#555" stroke-width="1.800"/></svg>
<svg style="left:1336px;top:646px" width="6" height="9" viewBox="0 0 6 9"><path d="M1 1l3.500 3.500L1 8" fill="none" stroke="#555" stroke-width="1.800"/></svg>
<!-- report page content -->
<svg id="purse" style="left:380px;top:155px" width="170" height="180" viewBox="0 0 688 729">
<defs>
<radialGradient id="gBody" cx="0.36" cy="0.32" r="0.8"><stop offset="0" stop-color="#ff5248"/><stop offset=".4" stop-color="#f0202a"/><stop offset=".8" stop-color="#d40a18"/><stop offset="1" stop-color="#b00510"/></radialGradient>
<radialGradient id="gShadow" cx=".5" cy=".5" r=".5"><stop offset="0" stop-color="#b4bcc2"/><stop offset=".6" stop-color="#ccd3d7"/><stop offset=".85" stop-color="#e4e8ea" stop-opacity=".8"/><stop offset="1" stop-color="#f4f5f6" stop-opacity="0"/></radialGradient>
<radialGradient id="gGold" cx=".4" cy=".35" r=".7"><stop offset="0" stop-color="#fff27a"/><stop offset=".5" stop-color="#fdc81c"/><stop offset="1" stop-color="#e89c08"/></radialGradient>
<linearGradient id="gRay" x1="0" y1="0" x2="0" y2="1"><stop offset="0" stop-color="#fff6a0" stop-opacity="0"/><stop offset=".5" stop-color="#ffe96a" stop-opacity=".7"/><stop offset="1" stop-color="#ffe04a" stop-opacity=".9"/></linearGradient>
<linearGradient id="gRay2" x1="0" y1="0" x2="0" y2="1"><stop offset="0" stop-color="#fff6a0" stop-opacity="0"/><stop offset=".5" stop-color="#fff0a0" stop-opacity=".7"/><stop offset="1" stop-color="#ffe98a" stop-opacity=".3"/></linearGradient>
<linearGradient id="gRim" x1="0" y1="0" x2="1" y2="1"><stop offset="0" stop-color="#f4a41a"/><stop offset=".5" stop-color="#ffd83a"/><stop offset="1" stop-color="#f0a818"/></linearGradient>
</defs>
<ellipse cx="346" cy="646" rx="262" ry="56" fill="url(#gShadow)"/>
<rect x="296" y="52" width="76" height="135" fill="url(#gRay)"/>
<path d="M340 120h68l-6 240h-70z" fill="url(#gRay2)"/>
<path d="M166 600C150 520 180 440 205 420C235 385 290 365 350 385C380 395 420 395 447 399C500 420 546 520 541 582C538 642 508 680 447 682C400 690 355 688 320 684C260 676 210 650 185 632C172 622 168 612 166 600Z" fill="url(#gBody)"/>
<path d="M432 400C500 412 548 520 541 585C537 645 505 682 447 682C466 640 474 590 458 540C447 500 440 450 432 400Z" fill="#b80812" opacity=".5"/>
<path d="M186 560c-8-60 16-120 44-150 26-24 70-30 104-18-70 24-116 96-126 176-2 16-20 14-22-8z" fill="#ff7668" opacity=".45"/>
<path d="M398 552l-3 54M420 546l9 48M441 540l18 30" stroke="#ff9484" stroke-width="8" stroke-linecap="round" opacity=".75"/>
<path d="M350 350c40-20 90 0 100 50l-22 85-50-40z" fill="#8a0c10"/>
<path d="M395 440l30 -10 5 50 -25 5z" fill="#1a0400"/>
<path d="M368 346c36-10 74 10 84 58 4 30-10 60-22 82" fill="none" stroke="#c77a00" stroke-width="24" stroke-linecap="round"/>
<path d="M368 344c36-10 74 10 84 58 4 30-10 60-22 82" fill="none" stroke="#f7b61a" stroke-width="17" stroke-linecap="round"/>
<ellipse cx="392" cy="424" rx="24" ry="30" transform="rotate(25 392 424)" fill="url(#gGold)" stroke="#d58a00" stroke-width="3"/>
<path d="M246 376c36-24 82-22 110 14 22 32 30 64 32 96" fill="none" stroke="#b86800" stroke-width="30" stroke-linecap="round"/>
<path d="M246 372c36-24 82-22 110 14 22 32 30 64 32 96" fill="none" stroke="url(#gRim)" stroke-width="22" stroke-linecap="round"/>
<path d="M252 364c32-18 74-16 98 16" fill="none" stroke="#fff08a" stroke-width="5" stroke-linecap="round"/>
<circle cx="249" cy="329" r="20" fill="url(#gGold)"/>
<circle cx="415" cy="310" r="20" fill="url(#gGold)"/>
<circle cx="407" cy="509" r="29" fill="url(#gGold)" stroke="#d58a00" stroke-width="2"/>
<ellipse cx="335" cy="152" rx="44" ry="27" transform="rotate(-35 335 152)" fill="url(#gGold)" stroke="#e5a010" stroke-width="3"/>
<ellipse cx="385" cy="216" rx="25" ry="41" transform="rotate(-15 385 216)" fill="url(#gGold)" stroke="#e5a010" stroke-width="3"/>
<ellipse cx="355" cy="330" rx="21" ry="57" transform="rotate(4 355 330)" fill="url(#gGold)" stroke="#e5a010" stroke-width="3"/>
</svg>
<span class="t rb" id="r1" style="left:650.500px;top:170.500px;font-size:21.900px;letter-spacing:-0.03px">Название Вашей организации</span>
<span class="t rr" id="r2" style="left:650px;top:197px;font-size:14.600px;letter-spacing:0.04px">Адрес: Страна, город, улица, дом, квартира</span>
<span class="t rr" id="r3" style="left:650px;top:213px;font-size:14.600px;letter-spacing:0.05px">Тел.: +7 (000) 000-00-00</span>
<span class="t rb" id="r4" style="left:650px;top:259.500px;font-size:21.900px;letter-spacing:-0.3px">Дела</span>
<!-- table -->
<div id="thead"></div>
<div class="hl" style="top:333px"></div><div class="hl" style="top:390px"></div><div class="hl" style="top:411px"></div><div class="hl" style="top:432px"></div><div class="hl" style="top:453px"></div><div class="hl" style="top:473px"></div>
<div class="vl" style="left:305px;top:333px;height:141px"></div>
<div class="vl" style="left:1289px;top:333px;height:141px"></div>
<div class="vl" style="left:341px;top:333px;height:58px"></div><div class="vl" style="left:522px;top:333px;height:58px"></div><div class="vl" style="left:698px;top:333px;height:58px"></div>
<div class="vl" style="left:341px;top:411px;height:63px"></div><div class="vl" style="left:522px;top:411px;height:63px"></div><div class="vl" style="left:698px;top:411px;height:63px"></div>
<span class="t tb" id="h1" style="left:315.500px;top:354.500px">№</span>
<span class="t tb" id="h2" style="left:408.500px;top:354.500px">Время</span>
<span class="t tb" id="h3" style="left:580px;top:354.500px">Человек</span>
<span class="t tb" id="h4" style="left:958.500px;top:354.500px">Описание</span>
<span class="t tb" id="g1" style="left:308.500px;top:392.500px">Петров Петр</span>
<span class="t tr" style="left:319px;top:414px">1</span>
<span class="t tr" id="c1" style="left:364.500px;top:414px">29.12.2015 12:24:57</span>
<span class="t tr cy" id="c2" style="left:525px;top:414px">Поставщик 4</span>
<span class="t tr cy" style="left:701px;top:414px">Оплатить</span>
<span class="t tr" style="left:319px;top:435px">2</span>
<span class="t tr" id="c3" style="left:395.500px;top:435px">26.02.2016</span>
<span class="t tr cy" style="left:525px;top:435px">Клиент 1</span>
<span class="t tr cy" id="c4" style="left:701px;top:435px">Выслать коммерческое предложение</span>
<span class="t tr" style="left:319px;top:455.500px">3</span>
<span class="t tr" style="left:395.500px;top:455.500px">01.03.2016</span>
<span class="t tr cy" style="left:525px;top:455.500px">Поставщик 2</span>
<span class="t tr cy" id="c5" style="left:701px;top:455.500px;color:#e0202e">Сделать заказ</span>


<!-- bottom: page status, tabs, status bar -->
<div id="pvbottom"></div>
<div id="pgstat"></div>
<span class="t" id="pgtxt" style="left:284.500px;top:667px;font-size:11px">Страница: 1 из 1</span>
<div id="pgsep"></div>
<div id="whitebox"></div><div id="whiteboxtop"></div>
<div id="tabband"></div>
<div id="tab"></div>
<svg style="left:9px;top:690px" width="14" height="16" viewBox="0 0 14.500 16" preserveAspectRatio="none"><path d="M1.700.6h7.500l4.600 4.600v9q0 1.200-1.200 1.200H1.700q-1.100 0-1.100-1.200V1.800Q.6.600 1.700.6z" fill="#f6f6f6" stroke="#5f5f5f" stroke-width="1.100" stroke-linejoin="round"/><path d="M2.800 2.500h5.700l2.700 3v4.500H2.800z" fill="#dcdcdc"/><path d="M2.800 11.800h8.800M2.800 13.600h8.800" stroke="#9c9c9c" stroke-width="1.300"/></svg>
<span class="t" id="tabtxt" style="left:29.500px;top:693px;font-size:11px;letter-spacing:0.18px">Отчет - Дела</span>
<div id="statusbar"></div>
<svg style="left:-0.5px;top:709px" width="18" height="18" viewBox="0 0 16 16" preserveAspectRatio="none"><ellipse cx="8" cy="14" rx="4.500" ry="1.300" fill="#b4c0d8"/><circle cx="8" cy="7" r="6" fill="#2f62c4" stroke="#2450a4" stroke-width=".6"/><ellipse cx="8" cy="4.200" rx="4.400" ry="2.800" fill="#8fb2ee" opacity=".8"/><rect x="7" y="6.400" width="2" height="4.200" fill="#fff"/><circle cx="8" cy="4.400" r="1.150" fill="#fff"/></svg>
<span class="t st" id="s1" style="left:25px;top:713px;letter-spacing:0.2px">2.0.911.10</span>
<div class="ssep" style="left:87px"></div>
<svg style="left:89px;top:710px" width="16" height="16" viewBox="0 0 16 16" preserveAspectRatio="none"><path d="M1 3l3.500-2 4 2v10.500l-4 2-3.500-2z" fill="#a8a8a8" stroke="#666" stroke-width=".7"/><path d="M4.500 5v10.500" stroke="#666" stroke-width=".6"/><path d="M1.800 5l2 1M1.800 7l2 1M1.800 9l2 1" stroke="#dedede" stroke-width=".8"/><rect x="7" y="6.500" width="8.500" height="6.500" fill="#6ab8f4" stroke="#3878c0" stroke-width=".9"/><path d="M9.500 15.500h4M11.500 13v2.500" stroke="#3878c0" stroke-width="1"/></svg>
<span class="t st" id="s2" style="left:112.500px;top:713px;letter-spacing:-0.17px">localhost</span>
<div class="ssep" style="left:163px"></div>
<svg style="left:165px;top:710px" width="15" height="16" viewBox="0 0 16 16" preserveAspectRatio="none"><path d="M3.800 5.500c-.5-3 1.300-5 4.200-5s4.700 2 4.200 5" fill="#b07c34" stroke="#865f24" stroke-width=".5"/><circle cx="8" cy="5.800" r="3.100" fill="#fbdcb0" stroke="#dcae72" stroke-width=".6"/><path d="M1 15.500c0-4 2.500-5.700 4.500-5.700l2.500 2 2.500-2c2 0 4.500 1.700 4.500 5.700z" fill="#e2e8f5" stroke="#8696c6" stroke-width=".9"/></svg>
<span class="t st" id="s3" style="left:188px;top:713px;letter-spacing:-0.3px">NIKOLAY (MAIN)</span>
<div class="ssep" style="left:275px"></div>
<svg style="left:280px;top:710px" width="15" height="16" viewBox="0 0 16 16" preserveAspectRatio="none"><rect x=".6" y="2" width="14.800" height="13.400" rx="1" fill="#fcf8de" stroke="#a2b674" stroke-width="1"/><rect x="1" y="2.300" width="14" height="3.500" fill="#68b458"/><path d="M3.500 1v3M12.500 1v3" stroke="#478742" stroke-width="1.300"/><path d="M3 8h2M7 8h2M11 8h2M3 10.500h2M7 10.500h2M3 13h2M7 13h2" stroke="#d8b844" stroke-width="1.800"/><path d="M11 10.500h2M11 13h2" stroke="#5496dc" stroke-width="1.800"/></svg>
<span class="t st" id="s4" style="left:302.500px;top:713px;letter-spacing:0.15px">08.08.2017</span>
<div class="ssep" style="left:367px"></div>
<span class="t st" id="s5" style="left:378.500px;top:713px;letter-spacing:0.2px">00:00:00:795</span>
<div id="goldline"></div>
<svg style="left:1352px;top:713px" width="12" height="12" viewBox="0 0 12 12"><path d="M9 1h2v2h-2zM9 5h2v2h-2zM9 9h2v2h-2zM5 5h2v2H5zM5 9h2v2H5zM1 9h2v2H1z" fill="#b8b8b8"/></svg>

</div>
</body>
</html>
